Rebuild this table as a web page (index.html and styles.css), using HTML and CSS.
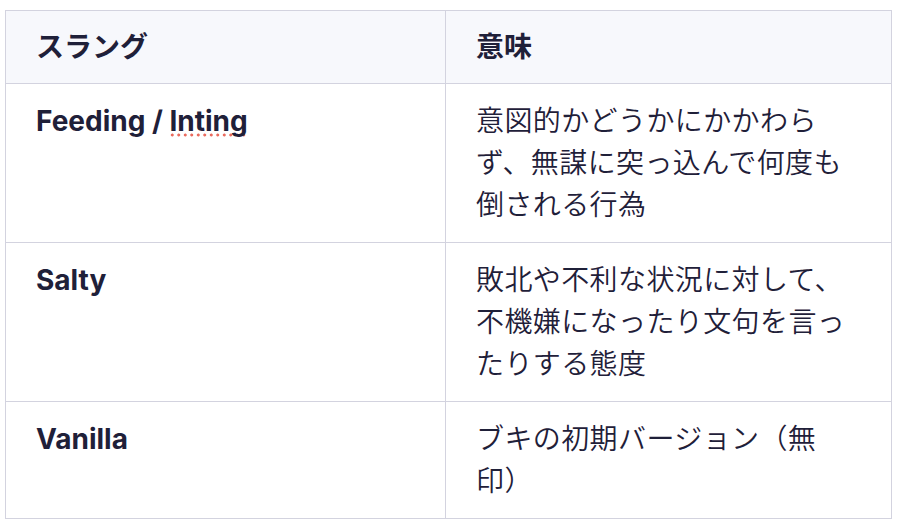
FILE: index.html
```html
<!DOCTYPE html>
<html lang="ja">
<head>
<meta charset="utf-8">
<link rel="stylesheet" href="styles.css">
</head>
<body>
<table class="slang">
  <colgroup><col class="c1"><col class="c2"></colgroup>
  <thead>
    <tr><th>スラング</th><th>意味</th></tr>
  </thead>
  <tbody>
    <tr><td class="term">Feeding / <span class="spell">Inting</span></td><td class="desc">意図的かどうかにかかわらず、無謀に突っ込んで何度も倒される行為</td></tr>
    <tr><td class="term">Salty</td><td class="desc">敗北や不利な状況に対して、不機嫌になったり文句を言ったりする態度</td></tr>
    <tr><td class="term">Vanilla</td><td class="desc">ブキの初期バージョン（無印）</td></tr>
  </tbody>
</table>
</body>
</html>
```
FILE: styles.css
```css
html, body { margin: 0; padding: 0; background: #ffffff; }
body { padding: 10px 0 0 5px; }
.slang {
  border-collapse: collapse;
  table-layout: fixed;
  width: 886px;
  font-family: Inter, "Noto Sans CJK JP", sans-serif;
  font-size: 28px;
  line-height: 42px;
  color: #1f2039;
}
.c1 { width: 440px; }
.c2 { width: 446px; }
.slang th, .slang td {
  border: 1px solid #d3d3df;
  text-align: left;
  vertical-align: top;
  padding: 16px 30px;
}
.slang th {
  background: #f7f8fc;
  font-weight: 700;
  padding-top: 15px;
  padding-bottom: 15px;
}
.slang td.desc {
  font-weight: 350;
  letter-spacing: 0.4px;
  text-spacing-trim: space-all;
}
.slang td.term { font-weight: 700; }
.spell {
  background-image: radial-gradient(circle at center, #ea6b5e 1.3px, transparent 1.8px);
  background-size: 6.5px 6px;
  background-repeat: repeat-x;
  background-position: 0 100%;
}
```
